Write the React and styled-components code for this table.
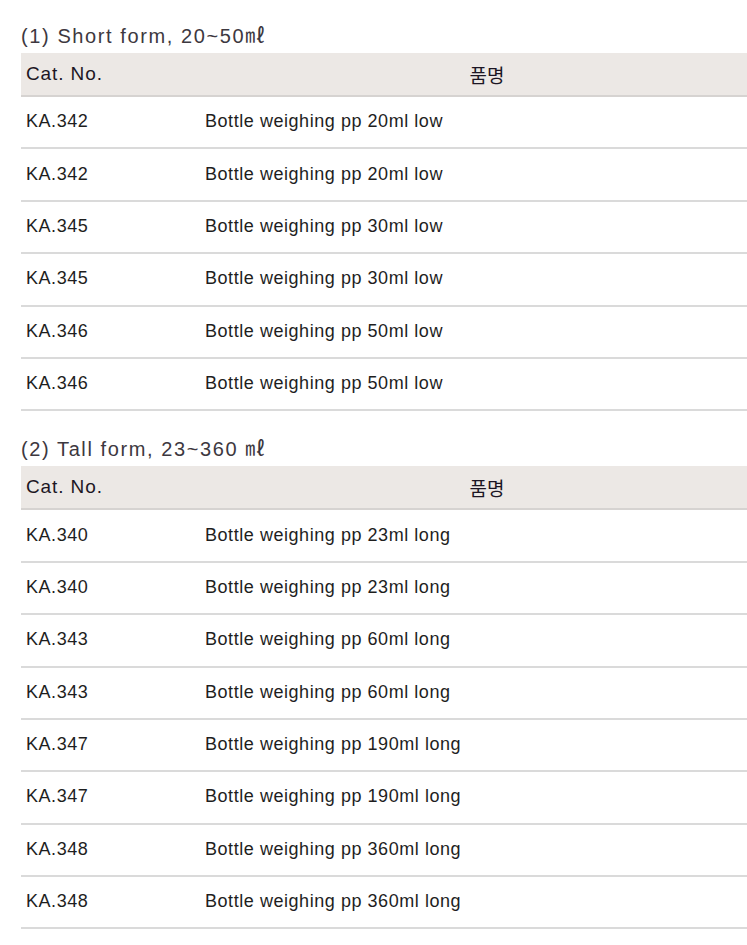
import styled, { createGlobalStyle } from 'styled-components'

const GlobalStyle = createGlobalStyle`
    body {
        margin: 0;
        background: #ffffff;
        overflow-x: hidden;
        font-family: "Liberation Sans", "Noto Sans CJK KR", sans-serif;
    }
`

const sections = [
    {
        title: '(1) Short form, 20~50㎖',
        rows: [
            ['KA.342', 'Bottle weighing pp 20ml low'],
            ['KA.342', 'Bottle weighing pp 20ml low'],
            ['KA.345', 'Bottle weighing pp 30ml low'],
            ['KA.345', 'Bottle weighing pp 30ml low'],
            ['KA.346', 'Bottle weighing pp 50ml low'],
            ['KA.346', 'Bottle weighing pp 50ml low'],
        ],
    },
    {
        title: '(2) Tall form, 23~360 ㎖',
        rows: [
            ['KA.340', 'Bottle weighing pp 23ml long'],
            ['KA.340', 'Bottle weighing pp 23ml long'],
            ['KA.343', 'Bottle weighing pp 60ml long'],
            ['KA.343', 'Bottle weighing pp 60ml long'],
            ['KA.347', 'Bottle weighing pp 190ml long'],
            ['KA.347', 'Bottle weighing pp 190ml long'],
            ['KA.348', 'Bottle weighing pp 360ml long'],
            ['KA.348', 'Bottle weighing pp 360ml long'],
        ],
    },
]

function App() {
    return (
        <Page>
            <GlobalStyle />
            {sections.map((section, i) => (
                <Section key={i}>
                    <Title>{section.title}</Title>
                    <Table>
                        <HeadRow>
                            <HeadCell>Cat. No.</HeadCell>
                            <HeadCell center>품명</HeadCell>
                        </HeadRow>
                        {section.rows.map((row, j) => (
                            <Row key={j}>
                                <Cell>{row[0]}</Cell>
                                <Cell>{row[1]}</Cell>
                            </Row>
                        ))}
                    </Table>
                </Section>
            ))}
        </Page>
    )
}

export default App

const Page = styled.div`
    width: 747px;
    overflow: hidden;
    padding: 20px 0 0 21px;
    box-sizing: border-box;
    display: flex;
    flex-direction: column;
    gap: 22px;
`

const Section = styled.section`
    display: flex;
    flex-direction: column;
    gap: 1px;
`

const Title = styled.h3`
    margin: 0;
    height: 32px;
    line-height: 32px;
    font-size: 20px;
    font-weight: normal;
    letter-spacing: 1.6px;
    color: #3d3840;
    white-space: nowrap;
`

const Table = styled.div`
    width: 753px;
    display: flex;
    flex-direction: column;
`

const HeadRow = styled.div`
    display: grid;
    grid-template-columns: 179px 1fr;
    height: 42px;
    background: #ece8e5;
    border-bottom: 2px solid #d6d3d1;
`

const HeadCell = styled.div`
    display: flex;
    align-items: center;
    justify-content: ${props => (props.center ? 'center' : 'flex-start')};
    padding-left: ${props => (props.center ? '0' : '5px')};
    font-size: 19px;
    letter-spacing: ${props => (props.center ? '0' : '0.9px')};
    color: #1c1624;
`

const Row = styled.div`
    display: grid;
    grid-template-columns: 179px 1fr;
    height: 50.4px;
    border-bottom: 2px solid #dadada;
`

const Cell = styled.div`
    display: flex;
    align-items: center;
    padding-left: 5px;
    padding-bottom: 1px;
    font-size: 18px;
    letter-spacing: 0.55px;
    color: #1e1e1e;
    white-space: nowrap;
`
